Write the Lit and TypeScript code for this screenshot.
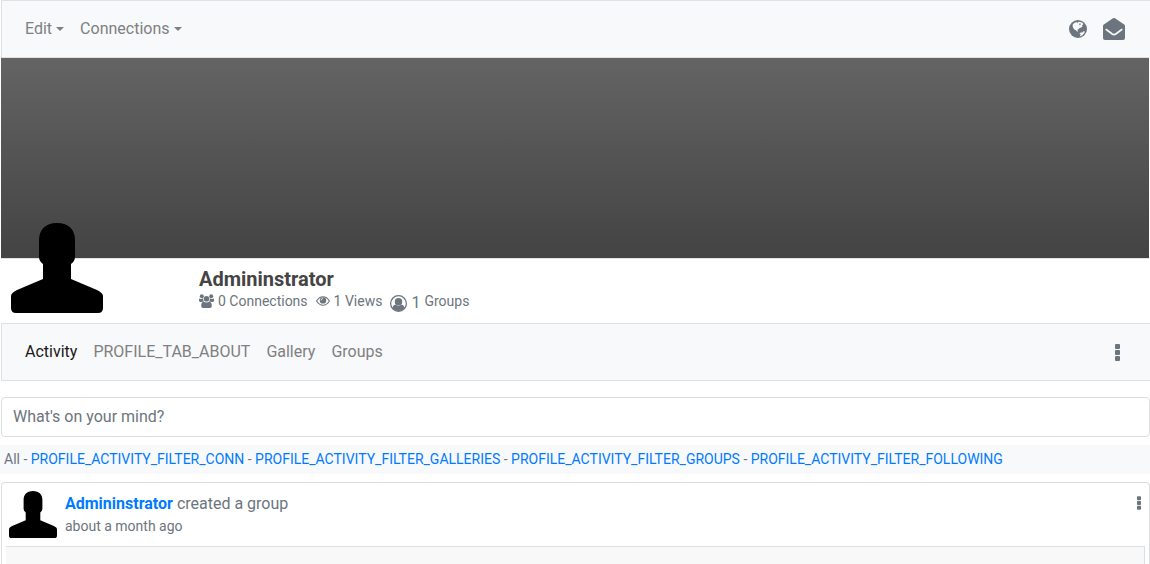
import { LitElement, html, css, svg } from "lit";
import { customElement, property } from "lit/decorators.js";

const silhouette = html`<svg class="silhouette" viewBox="0 0 92 90" preserveAspectRatio="none" role="img" aria-label="Profile picture">
  <path d="M28 17C28 7 34 0 46 0S64 7 64 17V34Q64 38 60 41V56L86 67Q92 70 92 73V85Q92 90 87 90H5Q0 90 0 85V73Q0 70 6 67L32 56V41Q28 38 28 34Z" />
</svg>`;

const icons: Record<string, { box: string; shape: unknown }> = {
  globe: {
    box: "0 0 18 18",
    shape: svg`<circle cx="9" cy="9" r="9" />
      <path fill="#f8f9fb" d="M3.8 4.2 6 2.4 8 2.2 8.6 3 9.6 1.8 12.4 2.2 14.2 3.6 14 4.8 12.8 5.2 13.6 6.2 12.2 7.4 10.6 8 9.2 9.6 8.4 9.4 8.8 11 8.4 12 7.2 10.6 5.4 9.6 4.2 8 3.6 6Z M10.4 13.4 11.6 12.4 13.4 12.6 14.2 11.2 15.8 11.4 15.2 13.2 13.4 15.2 11.6 16.2 10.9 15.4 11.8 14.5Z" />
      <path d="M10 4.1 11.2 3.3 11.9 4.2 10.8 5.2Z" />`,
  },
  mail: {
    box: "0 0 22 22",
    shape: svg`<path d="M0 8Q0 7 .8 6.4L10 .3Q11 -.2 12 .3L21.2 6.4Q22 7 22 8V20Q22 22 20 22H2Q0 22 0 20Z" />
      <path fill="none" stroke="#f8f9fb" stroke-width="1.6" stroke-linecap="round" d="M3.2 11.5 9.2 16Q11 17.2 12.8 16L18.8 11.5" />`,
  },
  people: {
    box: "0 0 15 14",
    shape: svg`<circle cx="2.8" cy="2.2" r="2" /><circle cx="12.2" cy="2.2" r="2" />
      <path d="M0 4.6Q2.5 5.6 4 4.2Q3.8 6.2 5 7.2L2.5 8H1.2Q0 8 0 6.6ZM15 4.6Q12.5 5.6 11 4.2Q11.2 6.2 10 7.2L12.5 8H13.8Q15 8 15 6.6Z" />
      <circle cx="7.5" cy="4.8" r="2.8" />
      <path d="M4.6 7.5Q7.5 9.4 10.4 7.5Q12.8 8 12.8 12Q12.8 14 11 14H4Q2.2 14 2.2 12Q2.2 8 4.6 7.5Z" />`,
  },
  eye: {
    box: "0 0 14 10",
    shape: svg`<path fill="none" stroke="currentColor" stroke-width="1.1" d="M.6 5Q3.2 .8 7 .8T13.4 5Q10.8 9.2 7 9.2T.6 5Z" />
      <circle cx="7" cy="4.4" r="3.2" /><path fill="none" stroke="#fff" stroke-width=".8" d="M5.1 4.4Q5.1 2.7 7 2.5" />`,
  },
  member: {
    box: "0 0 16 16",
    shape: svg`<circle cx="8" cy="8" r="7.4" fill="none" stroke="currentColor" stroke-width="1.2" />
      <circle cx="8" cy="6.4" r="3.5" /><path d="M5.2 9Q8 11.4 10.8 9Q13.2 9.4 13.6 12.4Q11 15.2 8 15.2T2.4 12.4Q2.8 9.4 5.2 9Z" />`,
  },
  more: {
    box: "0 0 5 17",
    shape: svg`<rect width="5" height="5" rx="1" /><rect y="6" width="5" height="5" rx="1" /><rect y="12" width="5" height="5" rx="1" />`,
  },
};

@customElement("ui-icon")
class UiIcon extends LitElement {
  @property() name = "globe";

  static styles = css`
    :host { display: block; flex: none; }
    .glyph { display: block; width: 100%; height: 100%; fill: currentColor; }
  `;

  render() {
    const icon = icons[this.name];
    return html`<svg class="glyph" viewBox=${icon.box} aria-hidden="true">${icon.shape}</svg>`;
  }
}

@customElement("app-root")
class AppRoot extends LitElement {
  static styles = css`
    :host {
      display: flex;
      flex-direction: column;
      min-height: 100vh;
      overflow: hidden;
      background: #fff;
      color: #6c757d;
      font: 16px/24px Roboto, sans-serif;
    }
    * { box-sizing: border-box; }
    a { color: #007bff; text-decoration: none; }
    button { border: 0; padding: 0; background: none; color: inherit; font: inherit; cursor: pointer; }
    .bar {
      display: flex;
      align-items: center;
      justify-content: space-between;
      margin-left: 1px;
      padding: 8px 25px 8px 15px;
      border: 1px solid #dee2e6;
      border-right: 0;
      background: #f8f9fb;
    }
    .links { display: flex; }
    .link { display: flex; align-items: center; gap: 4px; padding: 8px; color: #7f8081; }
    .link.current { color: #181818; }
    .caret { border: 4px solid transparent; border-top-color: currentColor; border-bottom: 0; }
    .actions { display: flex; align-items: center; gap: 16px; }
    .globe { width: 18px; height: 18px; }
    .mail { width: 22px; height: 22px; }
    .more { width: 5px; height: 17px; margin-right: 5px; }
    .cover {
      height: 200px;
      margin: 0 1px;
      background: linear-gradient(#636463, #434343);
    }
    .profile {
      position: relative;
      margin: 0 1px;
      padding: 8px 0 8px 198px;
      border-top: 1px solid #dee2e6;
    }
    .silhouette { display: block; width: 100%; height: 100%; }
    .portrait { position: absolute; left: 10px; bottom: 10px; width: 92px; height: 90px; }
    .name { margin: 0; color: #444; font-size: 20px; line-height: 24px; font-weight: 700; }
    .stats { display: flex; align-items: center; gap: 8px; height: 24px; font-size: 14px; line-height: 20px; padding-bottom: 4px; }
    .stat { display: flex; align-items: center; gap: 4px; }
    .people { width: 15px; height: 14px; }
    .eye { width: 14px; height: 10px; }
    .low { display: flex; align-items: center; gap: 4px; padding-top: 4px; font-size: 16px; }
    .member { width: 17px; height: 17px; }
    .compose {
      display: block;
      height: 40px;
      margin: 16px 0 8px 1px;
      padding: 0 11px 2px;
      border: 1px solid #dcdfe2;
      border-radius: 4px;
      background: #fff;
      color: #495057;
      font: inherit;
      outline-offset: -2px;
    }
    .compose::placeholder { color: #6c757d; opacity: 1; }
    .filters { padding: 4px; background: #f8f9fb; font-size: 14px; line-height: 21px; }
    .card {
      display: flex;
      flex: 1;
      flex-direction: column;
      margin: 8px 0 0 1px;
      padding: 8px 4px 0;
      border: 1px solid #dcdfe2;
      border-bottom: 0;
      border-radius: 4px 4px 0 0;
    }
    .post { display: flex; gap: 8px; padding: 0 4px 8px 3px; }
    .avatar { width: 48px; height: 47px; }
    .byline { flex: 1; padding-top: 1px; }
    .author { font-weight: 700; }
    .time { font-size: 14px; line-height: 20px; }
    .options { align-self: flex-start; margin-top: 5px; }
    .dots { width: 4px; height: 14px; }
    .preview { flex: 1; min-height: 16px; border: 1px solid #dcdfe2; border-width: 1px 1px 0 0; background: #f8f8f8; }
  `;

  private tabs = ["Activity", "PROFILE_TAB_ABOUT", "Gallery", "Groups"];
  private filters = ["CONN", "GALLERIES", "GROUPS", "FOLLOWING"];

  render() {
    return html`
      <nav class="bar">
        <div class="links">
          ${["Edit", "Connections"].map((t) => html`<button class="link">${t}<span class="caret"></span></button>`)}
        </div>
        <div class="actions">
          <button aria-label="Notifications"><ui-icon class="globe" name="globe"></ui-icon></button>
          <button aria-label="Messages"><ui-icon class="mail" name="mail"></ui-icon></button>
        </div>
      </nav>
      <div class="cover"></div>
      <header class="profile">
        <div class="portrait">${silhouette}</div>
        <h1 class="name">Admininstrator</h1>
        <div class="stats">
          <span class="stat"><ui-icon class="people" name="people"></ui-icon>0 Connections</span>
          <span class="stat"><ui-icon class="eye" name="eye"></ui-icon>1 Views</span>
          <span class="stat"><span class="low"><ui-icon class="member" name="member"></ui-icon>1</span>Groups</span>
        </div>
      </header>
      <nav class="bar">
        <div class="links">
          ${this.tabs.map((t, i) => html`<a class="link ${i === 0 ? "current" : ""}" href="#">${t}</a>`)}
        </div>
        <button aria-label="More"><ui-icon class="more" name="more"></ui-icon></button>
      </nav>
      <input class="compose" type="text" aria-label="What's on your mind?" placeholder="What's on your mind?" />
      <div class="filters">
        All${this.filters.map((f) => html` - <a href="#">PROFILE_ACTIVITY_FILTER_${f}</a>`)}
      </div>
      <article class="card">
        <div class="post">
          <div class="avatar">${silhouette}</div>
          <div class="byline">
            <div><a class="author" href="#">Admininstrator</a> created a group</div>
            <div class="time">about a month ago</div>
          </div>
          <button class="options" aria-label="Post options"><ui-icon class="dots" name="more"></ui-icon></button>
        </div>
        <div class="preview"></div>
      </article>
    `;
  }
}
